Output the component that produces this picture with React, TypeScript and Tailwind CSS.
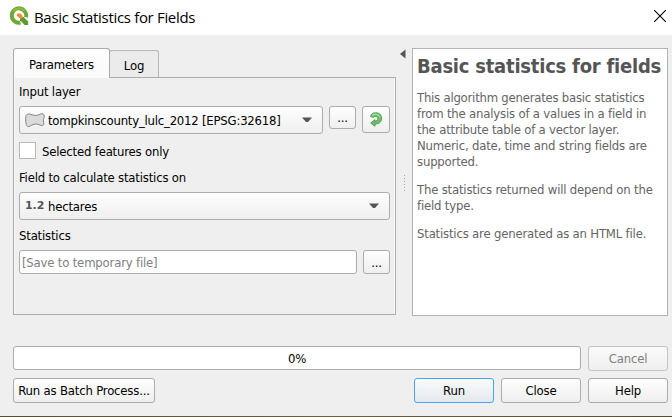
import type { ReactNode } from 'react';

const raised = 'rounded-[3px] border border-[#acacac] bg-linear-to-b from-[#fefefe] to-[#efefef]';

function Button({ className, children }: { className: string; children: ReactNode }) {
  return (
    <button className={`flex shrink-0 items-center justify-center rounded-[3px] border bg-linear-to-b ${className}`}>
      {children}
    </button>
  );
}

function DownArrow() {
  return (
    <svg width="10" height="6" viewBox="0 0 10 6" className="shrink-0">
      <path d="M0 0.5H10L6 5H4Z" fill="#555" />
    </svg>
  );
}

function Logo() {
  return (
    <svg width="20" height="20" viewBox="0 0 20 20" className="shrink-0">
      <path
        d="M11.5 16.6A7.2 7.2 0 1 1 17 11.2"
        fill="none"
        stroke="#6fa832"
        strokeWidth="4"
      />
      <path d="M4.2 5.2A7.4 7.4 0 0 1 15.6 5" fill="none" stroke="#8cba45" strokeWidth="2" />
      <path d="M11 11H14.6L19.2 15.6V19H15.6L11 14.2Z" fill="#5f9a30" />
      <path d="M7.8 7.4H11.4L13.6 9.8V12.4H11L7.8 9.8Z" fill="#f08a3a" />
    </svg>
  );
}

function PolygonIcon() {
  return (
    <svg width="20" height="15" viewBox="0 0 20 15" className="shrink-0">
      <path
        d="M1 2.5C2 .8 4 .7 6 1.4C10 3 13 2.6 15.5 1C17.5 .1 19 1 19.3 3C19.5 5 18 6 18.4 8C18.8 10 19.2 12 17.8 12.5C15 13 13 10.2 9 11.2C6 12.2 4 14.4 2.5 13.4C.5 12 .4 5.5 1 2.5Z"
        fill="#dadada"
        stroke="#858585"
      />
    </svg>
  );
}

function IterateIcon() {
  return (
    <svg width="14" height="15" viewBox="0 0 14 15">
      <path
        d="M1.4 4.3C2.6 .6 7.6 -.4 10.8 2C14 4.8 13 10.2 9.2 11.6L6 12.2V14.3L1.6 11L6 7.6V9.2C7.8 9 9 8 8.8 6.5C8.4 4.4 6 3.5 4.4 5.6Z"
        fill="#70bd69"
        stroke="#3f9449"
        strokeWidth="0.8"
      />
      <path d="M3.1 3.6C5.7 1.4 10 1.8 11 5.5" fill="none" stroke="#a3db9c" strokeWidth="1.4" />
    </svg>
  );
}

export default function App() {
  return (
    <div className="flex h-[417px] w-[672px] flex-col overflow-hidden bg-[#efefef] font-['DejaVu_Sans_Condensed','DejaVu_Sans',sans-serif] text-[13px] leading-4 tracking-[-0.19px] whitespace-nowrap text-black">
      <header className="flex h-[35px] shrink-0 items-center justify-between bg-white pr-[5px] pb-[3px] pl-[9px]">
        <div className="flex items-center gap-[5px]">
          <Logo />
          <h1 className="pt-[2px] font-['Open_Sans',sans-serif] text-[15px] leading-5 tracking-[-0.32px]">Basic Statistics for Fields</h1>
        </div>
        <svg width="14" height="14" viewBox="0 0 14 14">
          <path d="M1.2 1.2L12.8 12.8M12.8 1.2L1.2 12.8" stroke="#000" strokeWidth="1.1" />
        </svg>
      </header>

      <main className="flex h-[281px] shrink-0 pt-[13px] pr-1 pl-[13px]">
        <section className="flex w-[383px] flex-col">
          <div className="flex h-[29px] shrink-0 items-end">
            <div className="z-10 -mb-px flex h-[30px] w-[97px] items-center justify-center rounded-t-[3px] border border-b-0 border-[#acacac] bg-linear-to-b from-[#fefefe] to-[#fafafa] pt-[3px]">
              Parameters
            </div>
            <div className="-mb-px -ml-px flex h-[28px] w-[50px] items-center justify-center rounded-t-[3px] border border-[#b8b8b8] border-b-[#acacac] bg-[#ebebeb] pt-[3px]">
              Log
            </div>
          </div>
          <div className="flex h-[238px] flex-col border border-[#acacac] pt-[5px] pl-[5px] shadow-[inset_1px_0_#fafafa,inset_-1px_0_#fafafa]">
            <div className="h-[23px] pt-[1px]">Input layer</div>
            <div className="flex h-9 items-start">
              <div className={`flex h-7 w-[304px] items-center pr-[10px] pl-[5px] ${raised}`}>
                <PolygonIcon />
                <span className="flex-1 pt-px pl-[3px] tracking-[-0.22px]">tompkinscounty_lulc_2012 [EPSG:32618]</span>
                <DownArrow />
              </div>
              <Button className="ml-[6px] h-[23px] w-[27px] border-[#acacac] from-[#fefefe] to-[#efefef] pt-px">...</Button>
              <Button className="ml-[6px] h-[27px] w-[28px] border-[#acacac] from-[#fefefe] to-[#efefef]">
                <IterateIcon />
              </Button>
            </div>
            <div className="flex h-[17px] items-center">
              <span className="size-[17px] border border-[#b8b8b8] bg-white" />
              <span className="pt-[2px] pl-[6px]">Selected features only</span>
            </div>
            <div className="h-[33px] pt-[11px]">Field to calculate statistics on</div>
            <div className={`flex h-7 w-[371px] items-center pr-[10px] pl-[5px] ${raised}`}>
              <span className="w-[23px] font-['DejaVu_Sans',sans-serif] text-[11px] font-bold tracking-[-0.1px] text-[#555]">1.2</span>
              <span className="flex-1 pt-px">hectares</span>
              <DownArrow />
            </div>
            <div className="h-[30px] pt-2">Statistics</div>
            <div className="flex gap-[6px]">
              <div className="flex h-6 w-[338px] items-center rounded-[3px] border border-[#acacac] bg-white pt-px pl-[2px] text-[#808080]">
                [Save to temporary file]
              </div>
              <Button className="h-6 w-[27px] border-[#acacac] from-[#fefefe] to-[#efefef] pt-px">...</Button>
            </div>
          </div>
        </section>

        <div className="flex w-4 flex-col items-start pt-[1px] pl-1">
          <svg width="6" height="10" viewBox="0 0 6 10">
            <path d="M5.5 .5V9.5L0 5Z" fill="#555" />
          </svg>
          <div className="mt-[116px] ml-1 flex flex-col gap-[2px]">
            <i className="size-px bg-[#aaa]" />
            <i className="size-px bg-[#aaa]" />
            <i className="size-px bg-[#aaa]" />
            <i className="size-px bg-[#aaa]" />
            <i className="size-px bg-[#aaa]" />
            <i className="size-px bg-[#aaa]" />
          </div>
        </div>

        <article className="h-[268px] w-[256px] border border-[#b4b4b4] bg-white pt-[5px] pl-1 text-[#646464]">
          <h2 className="mb-3 text-[20px] leading-6 font-bold tracking-[-0.23px] text-[#555]">Basic statistics for fields</h2>
          <p className="mb-3">
            <span className="tracking-[-0.23px]">This algorithm generates basic statistics</span><br />
            from the analysis of a values in a field in<br />
            the attribute table of a vector layer.<br />
            Numeric, date, time and string fields are<br />
            supported.
          </p>
          <p className="mb-3">
            The statistics returned will depend on the<br />
            field type.
          </p>
          <p>Statistics are generated as an HTML file.</p>
        </article>
      </main>

      <footer className="flex flex-1 flex-col pt-[30px] pr-1 pl-[13px]">
        <div className="flex h-8 items-start gap-[7px]">
          <div className="flex h-6 w-[568px] items-center justify-center rounded-[3px] border border-[#acacac] bg-white pt-px">0%</div>
          <Button className="h-[25px] w-20 border-[#c4c4c4] from-[#fafafa] to-[#efefef] pt-px text-[#808080]">Cancel</Button>
        </div>
        <div className="flex gap-[7px]">
          <Button className="mr-auto h-[25px] w-[142px] border-[#acacac] from-[#fefefe] to-[#efefef] pt-px">Run as Batch Process...</Button>
          <Button className="h-[25px] w-20 border-[#43a7f5] from-[#fafcfe] to-[#e3e8ec] pt-px">Run</Button>
          <Button className="h-[25px] w-20 border-[#acacac] from-[#fefefe] to-[#efefef] pt-px">Close</Button>
          <Button className="h-[25px] w-20 border-[#acacac] from-[#fefefe] to-[#efefef] pt-px">Help</Button>
        </div>
      </footer>
      <div className="h-px shrink-0 bg-linear-to-r from-[#5c4d25] via-[#70602f] to-[#5c4d25]" />
    </div>
  );
}
